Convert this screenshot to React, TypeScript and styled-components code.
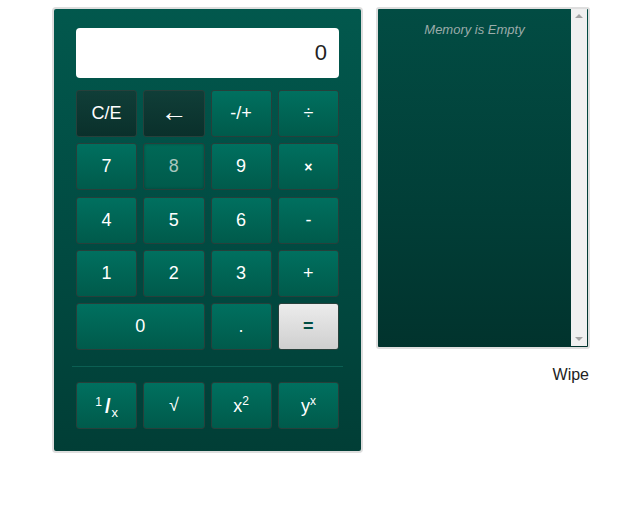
import React from 'react'
import styled, { createGlobalStyle, css } from 'styled-components'

type KeyVariant = 'normal' | 'dark' | 'hover' | 'equals'

type KeyProps = {
  $variant?: KeyVariant
  $span?: number
}

const GlobalStyle = createGlobalStyle`
  body {
    margin: 0;
    background: #ffffff;
    font-family: 'Liberation Sans', Arial, sans-serif;
  }
`

const Page = styled.div`
  display: flex;
  align-items: flex-start;
  gap: 13px;
  padding: 7px 0 0 52px;
`

const Calculator = styled.div`
  width: 263px;
  padding: 19px 22px 22px 22px;
  border: 2px solid #dedede;
  border-radius: 4px;
  background: linear-gradient(to bottom, #02584d 0%, #014a41 55%, #013e36 100%);
`

const Display = styled.div`
  height: 50px;
  background: #ffffff;
  border-radius: 4px;
  display: flex;
  align-items: center;
  justify-content: flex-end;
  padding-right: 12px;
  box-sizing: border-box;
  font-size: 22px;
  color: #222222;
  margin-bottom: 12px;
`

const Keypad = styled.div`
  display: grid;
  grid-template-columns: repeat(4, 1fr);
  grid-auto-rows: 47px;
  column-gap: 6px;
  row-gap: 6.3px;
`

const variants = {
  normal: css`
    background: linear-gradient(to bottom, #00705f 0%, #005a4b 100%);
    color: #ffffff;
  `,
  dark: css`
    background: linear-gradient(to bottom, #103e38 0%, #0a302b 100%);
    color: #ffffff;
  `,
  hover: css`
    background: linear-gradient(to bottom, #006957 0%, #005a4b 100%);
    color: #a9c6bf;
    box-shadow: inset 0 0 3px rgba(0, 0, 0, 0.25);
  `,
  equals: css`
    background: linear-gradient(to bottom, #ececec 0%, #cfcfcf 100%);
    color: #004d43;
    font-weight: 700;
  `,
}

const Key = styled.div<KeyProps>`
  grid-column: span ${(p) => p.$span ?? 1};
  display: flex;
  align-items: center;
  justify-content: center;
  border: 1px solid #27403b;
  border-radius: 3px;
  box-sizing: border-box;
  font-size: 18px;
  ${(p) => variants[p.$variant ?? 'normal']}
`

const Label = styled.span`
  line-height: 1;
`

const ArrowGlyph = styled.span`
  font-size: 27px;
  line-height: 1;
  margin-top: -3px;
`

const SmallOp = styled.span`
  font-size: 14px;
  font-weight: 700;
`

const Sup = styled.sup`
  font-size: 12px;
  vertical-align: 7px;
  line-height: 0;
`

const Sub = styled.sub`
  font-size: 13px;
  vertical-align: -4px;
  line-height: 0;
`

const Slash = styled.span`
  font-size: 20px;
  font-weight: 700;
  margin: 0 1px 0 3px;
`

const Divider = styled.div`
  height: 1px;
  background: #0b5f53;
  margin: 16px -4px 15px -4px;
`

const MemoryColumn = styled.div`
  display: flex;
  flex-direction: column;
  align-items: flex-end;
`

const MemoryPanel = styled.div`
  width: 210px;
  height: 338px;
  display: flex;
  border: 2px solid #dedede;
  border-radius: 3px;
  background: linear-gradient(to bottom, #024c43 0%, #013e37 60%, #01332d 100%);
`

const MemoryList = styled.div`
  flex: 1;
  padding-top: 13px;
  text-align: center;
  font-size: 13px;
  font-style: italic;
  color: #9cacaa;
`

const Scrollbar = styled.div`
  width: 16px;
  margin: 0 1px 1px 0;
  background: #f0f0f0;
  display: flex;
  flex-direction: column;
  justify-content: space-between;
  align-items: center;
  padding: 5px 0;
  box-sizing: border-box;
`

const Arrow = styled.div<{ $down?: boolean }>`
  width: 0;
  height: 0;
  border-left: 4px solid transparent;
  border-right: 4px solid transparent;
  ${(p) =>
    p.$down
      ? css`border-top: 4px solid #a3a3a3;`
      : css`border-bottom: 4px solid #a3a3a3;`}
`

const WipeLink = styled.div`
  margin-top: 17px;
  margin-right: 1px;
  font-size: 16px;
  color: #222222;
`

export default function App() {
  return (
    <Page>
      <GlobalStyle />
      <Calculator>
        <Display>0</Display>
        <Keypad>
          <Key $variant="dark">C/E</Key>
          <Key $variant="dark">
            <ArrowGlyph>←</ArrowGlyph>
          </Key>
          <Key>-/+</Key>
          <Key>÷</Key>
          <Key>7</Key>
          <Key $variant="hover">8</Key>
          <Key>9</Key>
          <Key>
            <SmallOp>×</SmallOp>
          </Key>
          <Key>4</Key>
          <Key>5</Key>
          <Key>6</Key>
          <Key>-</Key>
          <Key>1</Key>
          <Key>2</Key>
          <Key>3</Key>
          <Key>+</Key>
          <Key $span={2}>0</Key>
          <Key>.</Key>
          <Key $variant="equals">=</Key>
        </Keypad>
        <Divider />
        <Keypad>
          <Key>
            <Label>
              <Sup>1</Sup>
              <Slash>/</Slash>
              <Sub>x</Sub>
            </Label>
          </Key>
          <Key>√</Key>
          <Key>
            <Label>
              x<Sup>2</Sup>
            </Label>
          </Key>
          <Key>
            <Label>
              y<Sup>x</Sup>
            </Label>
          </Key>
        </Keypad>
      </Calculator>
      <MemoryColumn>
        <MemoryPanel>
          <MemoryList>Memory is Empty</MemoryList>
          <Scrollbar>
            <Arrow />
            <Arrow $down />
          </Scrollbar>
        </MemoryPanel>
        <WipeLink>Wipe</WipeLink>
      </MemoryColumn>
    </Page>
  )
}
